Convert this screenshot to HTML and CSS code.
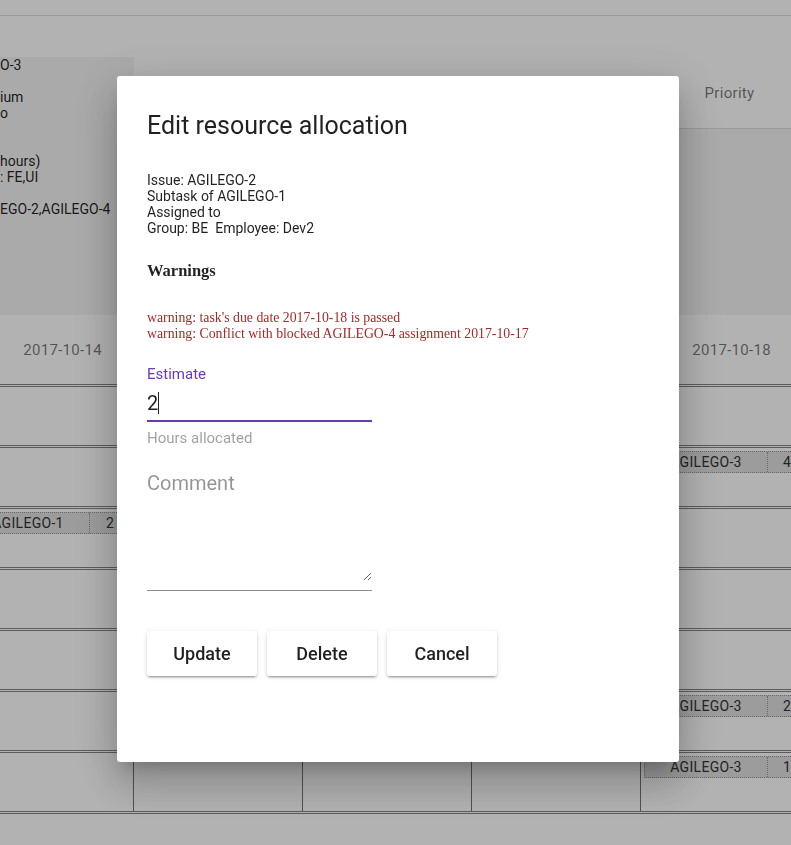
FILE: index.html
```html
<!DOCTYPE html>
<html lang="en">
<head>
<meta charset="utf-8">
<title>Edit resource allocation</title>
<link rel="stylesheet" href="styles.css">
</head>
<body>
<div class="page">
  <div class="topbar"></div>
  <div class="toolbar"></div>
  <div class="board">
    <div class="issue-cell">
      <div>O-3</div>
      <div>&nbsp;</div>
      <div>ium</div>
      <div>o</div>
      <div>&nbsp;</div>
      <div>&nbsp;</div>
      <div>hours)</div>
      <div>: FE,UI</div>
      <div>&nbsp;</div>
      <div>EGO-2,AGILEGO-4</div>
    </div>
    <div class="head-cell">Summary</div>
    <div class="head-cell">Status</div>
    <div class="head-cell">Assignee</div>
    <div class="head-cell">Priority</div>
    <div class="grey-cell"></div>
    <div class="grey-cell"></div>
    <div class="grey-cell"></div>
    <div class="grey-cell"></div>
  </div>
  <div class="dates">
    <div class="date">2017-10-14</div>
    <div class="date">2017-10-15</div>
    <div class="date">2017-10-16</div>
    <div class="date">2017-10-17</div>
    <div class="date">2017-10-18</div>
  </div>
  <div class="rows">
    <div class="row">
      <div class="cell"></div><div class="cell"></div><div class="cell"></div><div class="cell"></div><div class="cell"></div>
    </div>
    <div class="row">
      <div class="cell"></div><div class="cell"></div><div class="cell"></div><div class="cell"></div>
      <div class="cell"><div class="chip"><span class="chip-key">AGILEGO-3</span><span class="chip-hours">4</span></div></div>
    </div>
    <div class="row">
      <div class="cell first"><div class="chip"><span class="chip-key">AGILEGO-1</span><span class="chip-hours">2</span></div></div>
      <div class="cell"></div><div class="cell"></div><div class="cell"></div><div class="cell"></div>
    </div>
    <div class="row">
      <div class="cell"></div><div class="cell"></div><div class="cell"></div><div class="cell"></div><div class="cell"></div>
    </div>
    <div class="row">
      <div class="cell"></div><div class="cell"></div><div class="cell"></div><div class="cell"></div><div class="cell"></div>
    </div>
    <div class="row">
      <div class="cell"></div><div class="cell"></div><div class="cell"></div><div class="cell"></div>
      <div class="cell"><div class="chip"><span class="chip-key">AGILEGO-3</span><span class="chip-hours">2</span></div></div>
    </div>
    <div class="row">
      <div class="cell"></div><div class="cell"></div><div class="cell"></div><div class="cell"></div>
      <div class="cell"><div class="chip"><span class="chip-key">AGILEGO-3</span><span class="chip-hours">1</span></div></div>
    </div>
  </div>
</div>

<div class="overlay">
  <div class="dialog" role="dialog">
    <h2 class="dialog-title">Edit resource allocation</h2>
    <div class="info">
      <div>Issue: AGILEGO-2</div>
      <div>Subtask of AGILEGO-1</div>
      <div>Assigned to</div>
      <div class="pre">Group: BE  Employee: Dev2</div>
    </div>
    <h4 class="warn-title">Warnings</h4>
    <div class="warnings">
      <div>warning: task's due date 2017-10-18 is passed</div>
      <div>warning: Conflict with blocked AGILEGO-4 assignment 2017-10-17</div>
    </div>
    <div class="field">
      <div class="field-label">Estimate</div>
      <div class="field-input"><span>2</span><span class="caret"></span></div>
      <div class="field-line"></div>
      <div class="field-hint">Hours allocated</div>
    </div>
    <div class="textarea-field">
      <textarea class="comment" placeholder="Comment"></textarea>
    </div>
    <div class="actions">
      <button class="btn">Update</button>
      <button class="btn">Delete</button>
      <button class="btn">Cancel</button>
    </div>
  </div>
</div>
</body>
</html>
```
FILE: styles.css
```css
html, body {
  margin: 0;
  padding: 0;
  overflow: hidden;
  background: #fff;
  font-family: Roboto, "Liberation Sans", sans-serif;
}

.page {
  width: 791px;
  height: 845px;
  overflow: hidden;
}

.topbar {
  height: 15px;
  border-bottom: 1px solid #dcdcdc;
}

.toolbar {
  height: 41px;
}

.board {
  display: grid;
  grid-template-columns: repeat(5, 169px);
  grid-template-rows: 72px 186px;
  margin-left: -35px;
}

.issue-cell {
  grid-row: 1 / span 2;
  background: #f4f4f4;
  padding-left: 35px;
  font-size: 14px;
  line-height: 16px;
  color: rgba(0, 0, 0, 0.87);
  white-space: nowrap;
  overflow: hidden;
}

.head-cell {
  display: flex;
  align-items: center;
  justify-content: center;
  padding-left: 8px;
  padding-top: 1px;
  border-bottom: 1px solid #dcdcdc;
  font-size: 15px;
  letter-spacing: 0.3px;
  color: rgba(0, 0, 0, 0.54);
}

.grey-cell {
  background: #f4f4f4;
}

.dates {
  display: grid;
  grid-template-columns: repeat(5, 167.25px);
  margin-left: -21px;
  height: 69px;
  border-bottom: 3px double #838383;
  width: 830px;
}

.date {
  display: flex;
  align-items: center;
  justify-content: center;
  font-size: 15px;
  letter-spacing: 0.3px;
  color: rgba(0, 0, 0, 0.54);
  padding-top: 1px;
}

.rows {
  margin-left: -35px;
}

.row {
  display: grid;
  grid-template-columns: repeat(5, 169px);
  height: 58px;
  border-bottom: 3px double #838383;
}

.cell {
  border-right: 1px solid #747474;
  padding: 3px 2px 0 3px;
}

.cell.first {
  padding-left: 1px;
}

.chip {
  display: flex;
  height: 20px;
  border: 1px dotted #979797;
  background: #e0e0e0;
  font-size: 14px;
  letter-spacing: 0.3px;
  color: #333;
}

.chip-key {
  width: 122px;
  display: flex;
  align-items: center;
  justify-content: center;
}

.chip-hours {
  flex: 1;
  display: flex;
  align-items: center;
  justify-content: center;
  border-left: 1px dotted #979797;
}

/* overlay + dialog */
.overlay {
  position: fixed;
  inset: 0;
  background: rgba(0, 0, 0, 0.3);
  padding: 76px 0 0 117px;
}

.dialog {
  width: 502px;
  height: 566px;
  padding: 34px 30px 86px;
  background: #fff;
  border-radius: 3px;
  box-shadow: 0 11px 15px -7px rgba(0, 0, 0, 0.2),
              0 24px 38px 3px rgba(0, 0, 0, 0.14),
              0 9px 46px 8px rgba(0, 0, 0, 0.12);
  color: rgba(0, 0, 0, 0.87);
}

.dialog-title {
  margin: 0;
  font-size: 25px;
  line-height: 32px;
  font-weight: 400;
}

.info {
  margin-top: 30px;
  font-size: 14px;
  line-height: 16px;
}

.pre {
  white-space: pre;
}

.warn-title {
  margin: 26px 0 0;
  font-family: "Liberation Serif", "Times New Roman", serif;
  font-size: 16.5px;
  line-height: 18px;
  font-weight: bold;
}

.warnings {
  margin-top: 30px;
  font-family: "Liberation Serif", "Times New Roman", serif;
  font-size: 13.8px;
  line-height: 16px;
  color: #a52a2a;
}

.field {
  margin-top: 23px;
  width: 225px;
}

.field-label {
  font-size: 15px;
  line-height: 18px;
  color: #673ab7;
}

.field-input {
  margin-top: 8px;
  height: 24px;
  font-size: 20px;
  line-height: 24px;
  display: flex;
  align-items: center;
  color: rgba(0, 0, 0, 0.87);
}

.caret {
  display: inline-block;
  width: 1px;
  height: 22px;
  background: #222;
}

.field-line {
  margin-top: 5px;
  height: 2px;
  background: #673ab7;
}

.field-hint {
  margin-top: 7px;
  font-size: 15px;
  line-height: 18px;
  color: rgba(0, 0, 0, 0.38);
}

.textarea-field {
  margin-top: 25px;
  width: 225px;
  padding-bottom: 9px;
  border-bottom: 1px solid #8c8c8c;
}

.comment {
  display: block;
  width: 225px;
  height: 109px;
  margin: 0;
  padding: 0;
  border: none;
  outline: none;
  background: transparent;
  font-family: Roboto, "Liberation Sans", sans-serif;
  font-size: 20px;
  line-height: 23px;
  color: rgba(0, 0, 0, 0.87);
  resize: vertical;
}

.comment::placeholder {
  color: rgba(0, 0, 0, 0.42);
}

.actions {
  margin-top: 40px;
  display: flex;
  gap: 10px;
}

.btn {
  width: 110px;
  height: 45px;
  border: none;
  border-radius: 3px;
  background: #fff;
  font-family: Roboto, "Liberation Sans", sans-serif;
  font-size: 18px;
  font-weight: 500;
  color: rgba(0, 0, 0, 0.87);
  box-shadow: 0 3px 1px -2px rgba(0, 0, 0, 0.2),
              0 2px 2px 0 rgba(0, 0, 0, 0.14),
              0 1px 5px 0 rgba(0, 0, 0, 0.12);
  padding: 0;
}
```
